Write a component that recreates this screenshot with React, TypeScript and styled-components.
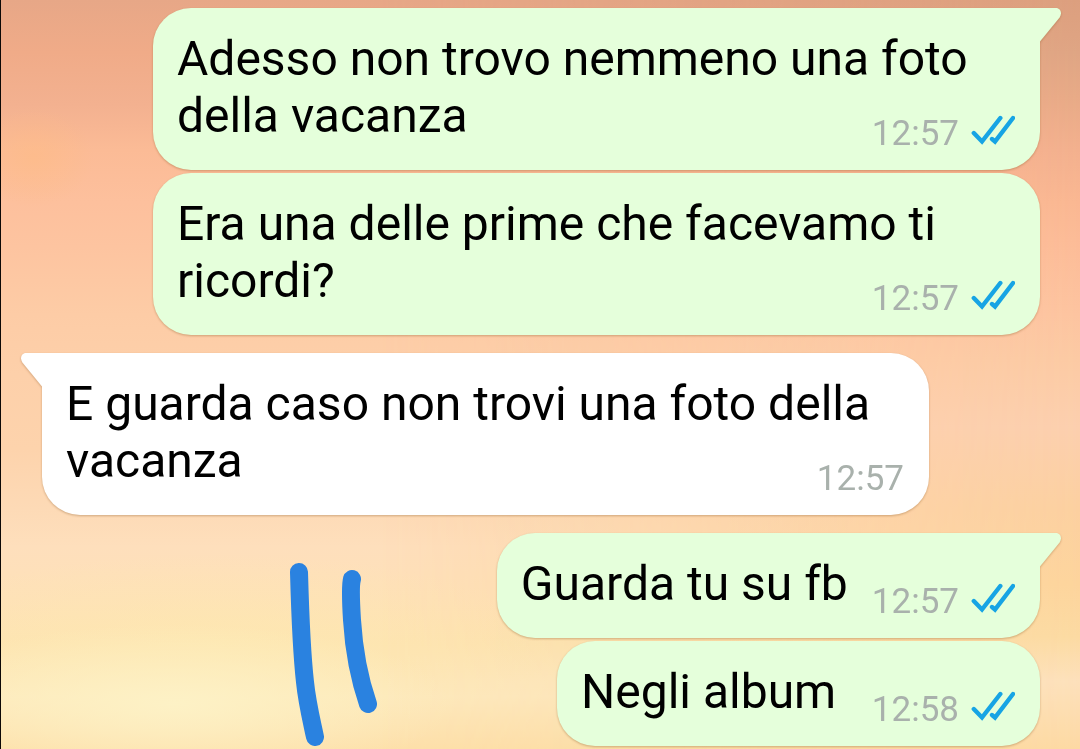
import React from "react";
import styled, { createGlobalStyle, css } from "styled-components";

const GlobalStyle = createGlobalStyle`
  *, *::before, *::after { box-sizing: border-box; }
  body {
    margin: 0;
    font-family: Roboto, "Liberation Sans", sans-serif;
    color: #000;
  }
`;

/* Sunset sky: warm bands on the left that fade into a duskier set on the right. */
const Wallpaper = styled.main`
  position: relative;
  isolation: isolate;
  min-height: 100vh;
  padding: 8px 40px 3px 41px;
  overflow: hidden;
  border-left: 1px solid #0c0806;
  background:
    radial-gradient(ellipse 60px 50px at 3% 21%, rgba(255, 188, 130, 0.5), transparent),
    radial-gradient(ellipse 280px 80px at 16% 94%, rgba(253, 243, 200, 0.85), transparent),
    radial-gradient(ellipse 340px 90px at 20% 86%, rgba(253, 232, 176, 0.7), transparent),
    linear-gradient(
      #e7a787 0%,
      #f0ab88 7%,
      #f3b190 14%,
      #fbbb96 20%,
      #fdc09d 27%,
      #fdc4a0 33%,
      #fdcca6 42%,
      #fdd0aa 50%,
      #fdd3ac 60%,
      #fddab6 68%,
      #fedfbc 73%,
      #fee1b8 80%,
      #fde4b2 86%,
      #fde9bc 93%,
      #fde0aa 100%
    );

  &::before {
    content: "";
    position: absolute;
    inset: 0;
    z-index: -1;
    background: linear-gradient(
      #dc9f7e 0%,
      #dfa584 7%,
      #e8aa87 13%,
      #f3b08e 20%,
      #fab792 27%,
      #fcbb97 32%,
      #fdc4a0 42%,
      #fccaa4 48%,
      #fccfae 57%,
      #fcd0a0 68%,
      #fdd49c 78%,
      #fcdaa2 85%,
      #fde0bb 91%,
      #fdd9a3 100%
    );
    mask-image: linear-gradient(to right, transparent 35%, #000);
  }
`;

const Thread = styled.ol`
  display: flex;
  flex-direction: column;
  margin: 0;
  padding: 0;
  list-style: none;
`;

const Bubble = styled.li<{ $sent: boolean; $first: boolean }>`
  position: relative;
  min-width: 483px;
  max-width: calc(100% - 111px);
  margin-top: ${(p) => (p.$first ? 18 : 3)}px;
  padding: 22px 25px 15px 24px;
  border-radius: 38px;
  filter: drop-shadow(0 1px 1px rgba(140, 90, 40, 0.4));
  align-self: ${(p) => (p.$sent ? "flex-end" : "flex-start")};
  background: ${(p) => (p.$sent ? "#e5ffdb" : "#fff")};
  ${(p) =>
    p.$first &&
    (p.$sent
      ? css`
          border-top-right-radius: 0;
        `
      : css`
          border-top-left-radius: 0;
        `)}

  &:first-child {
    margin-top: 0;
  }
`;

const TailShape = styled.svg<{ $sent: boolean }>`
  position: absolute;
  top: 0;
  width: 22px;
  height: 38px;
  overflow: visible;
  fill: ${(p) => (p.$sent ? "#e5ffdb" : "#fff")};
  ${(p) =>
    p.$sent
      ? css`
          left: 100%;
        `
      : css`
          right: 100%;
          transform: scaleX(-1);
        `}
`;

const Message = styled.p`
  display: flow-root;
  margin: 0;
  font-size: 48px;
  line-height: 57px;
`;

const Meta = styled.span`
  float: right;
  display: flex;
  align-items: flex-start;
  gap: 12px;
  margin: 26px 0 0 24px;
  font-size: 35px;
  line-height: 42px;
  color: #a9b1ac;
`;

const Ticks = styled.svg`
  width: 44px;
  height: 34px;
  fill: none;
  stroke: #17a4e4;
  stroke-width: 4.4;
  stroke-linecap: round;
  stroke-linejoin: miter;
`;

const Doodle = styled.svg`
  position: absolute;
  top: 562px;
  left: 288px;
  width: 88px;
  height: 184px;
  fill: none;
  stroke: #2a82e0;
  stroke-width: 18;
  stroke-linecap: round;
  stroke-linejoin: round;
  pointer-events: none;
`;

function Tail({ sent }: { sent: boolean }) {
  return (
    <TailShape $sent={sent} viewBox="0 0 22 38" aria-hidden="true">
      <path d="M-1 0H16C20.5 0 22.5 5 19.6 9.500L0 33.500H-1Z" />
    </TailShape>
  );
}

function ReadTicks() {
  return (
    <Ticks viewBox="0 0 44 34" role="img" aria-label="Letto">
      <path d="M2.800 20L11 28.500L29.300 5" />
      <path d="M21 26L24 28.500L42 5" />
    </Ticks>
  );
}

type Entry = { text: string; time: string; sent: boolean; first: boolean };

const entries: Entry[] = [
  { text: "Adesso non trovo nemmeno una foto della vacanza", time: "12:57", sent: true, first: true },
  { text: "Era una delle prime che facevamo ti ricordi?", time: "12:57", sent: true, first: false },
  { text: "E guarda caso non trovi una foto della vacanza", time: "12:57", sent: false, first: true },
  { text: "Guarda tu su fb", time: "12:57", sent: true, first: true },
  { text: "Negli album", time: "12:58", sent: true, first: false },
];

export default function App() {
  return (
    <>
      <GlobalStyle />
      <Wallpaper>
        <Thread>
          {entries.map((entry) => (
            <Bubble key={entry.text} $sent={entry.sent} $first={entry.first}>
              {entry.first && <Tail sent={entry.sent} />}
              <Message>
                {entry.text}
                <Meta>
                  <time>{entry.time}</time>
                  {entry.sent && <ReadTicks />}
                </Meta>
              </Message>
            </Bubble>
          ))}
        </Thread>
        <Doodle viewBox="0 0 88 184" aria-hidden="true">
          <path d="M10 10C11 46 12 84 16 120C18 140 22 156 26 175" />
          <path d="M63 17C61 24 62 42 63 58C65 90 70 116 79 142" />
        </Doodle>
      </Wallpaper>
    </>
  );
}
